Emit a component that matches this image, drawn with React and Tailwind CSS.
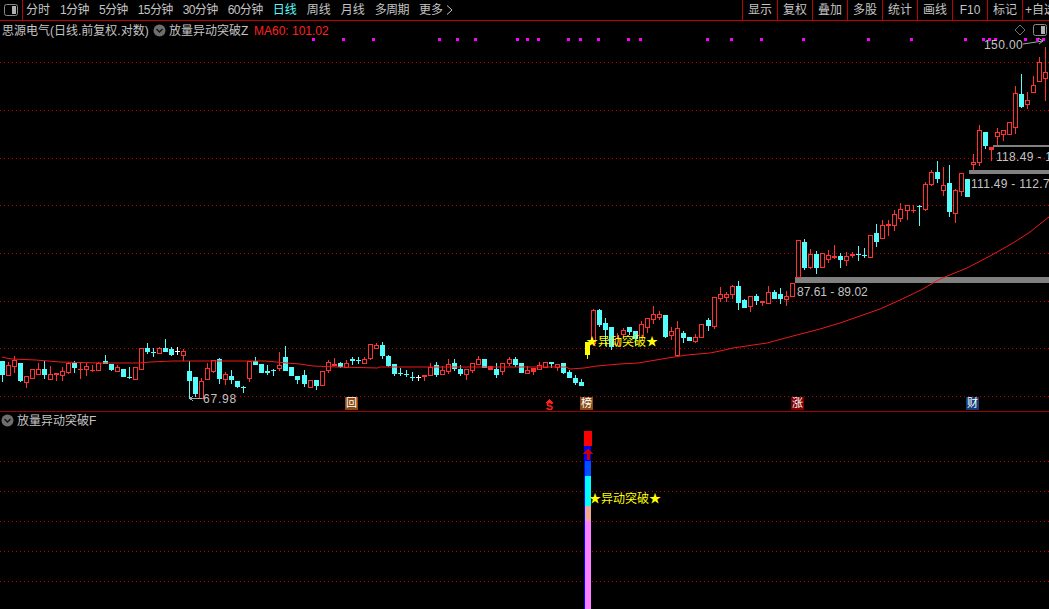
const tabs = ['分时', '1分钟', '5分钟', '15分钟', '30分钟', '60分钟', '日线', '周线', '月线', '多周期', '更多'];
const rightTabs = ['显示', '复权', '叠加', '多股', '统计', '画线', 'F10', '标记'];

// [type, high, bodyTop, bodyBottom, low] in page pixels. r = hollow red, c = cyan, f = solid red, w = white cross
const candles = [
  ['c', 361, 361, 374, 381], ['r', 362, 365, 375, 375], ['r', 356, 360, 366, 372], ['c', 363, 363, 380, 381], ['r', 376, 376, 382, 387],
  ['r', 369, 369, 378, 378], ['r', 363, 369, 374, 374], ['c', 361, 369, 374, 378], ['r', 366, 374, 379, 379], ['f', 373, 373, 374, 380],
  ['r', 367, 371, 375, 380], ['r', 362, 363, 372, 373], ['c', 361, 363, 367, 372], ['f', 363, 369, 369, 378], ['r', 363, 366, 369, 375],
  ['f', 365, 370, 370, 371], ['r', 362, 363, 370, 370], ['c', 355, 361, 363, 363], ['c', 364, 364, 369, 370], ['r', 365, 367, 371, 371],
  ['c', 369, 369, 376, 376], ['c', 367, 377, 377, 378], ['r', 367, 367, 379, 379], ['r', 348, 348, 369, 369], ['c', 343, 348, 351, 353],
  ['c', 348, 352, 352, 356], ['r', 347, 348, 353, 353], ['c', 339, 348, 351, 351], ['c', 347, 349, 354, 355], ['w', 347, 351, 351, 354],
  ['r', 349, 351, 355, 360], ['c', 361, 371, 380, 398], ['c', 377, 377, 393, 396], ['r', 378, 381, 398, 398], ['r', 363, 368, 379, 379],
  ['r', 360, 360, 371, 372], ['c', 358, 359, 378, 383], ['r', 372, 374, 379, 384], ['c', 370, 376, 379, 383], ['c', 381, 381, 386, 387],
  ['c', 386, 387, 387, 392], ['r', 361, 361, 378, 381], ['c', 357, 361, 364, 364], ['c', 364, 364, 372, 372], ['c', 365, 371, 372, 374],
  ['c', 369, 370, 370, 375], ['r', 352, 365, 368, 370], ['c', 346, 357, 370, 370], ['c', 367, 367, 375, 375], ['c', 376, 376, 379, 383],
  ['c', 370, 375, 383, 386], ['r', 380, 380, 387, 387], ['c', 380, 380, 385, 389], ['r', 371, 371, 385, 385], ['r', 360, 362, 370, 372],
  ['f', 358, 364, 365, 365], ['c', 362, 363, 366, 367], ['r', 360, 363, 367, 367], ['c', 357, 359, 360, 364], ['c', 357, 360, 360, 363],
  ['r', 357, 359, 363, 363], ['r', 344, 344, 358, 359], ['r', 343, 345, 348, 348], ['c', 342, 345, 355, 358], ['c', 355, 356, 365, 366],
  ['c', 364, 364, 373, 375], ['c', 368, 373, 373, 375], ['c', 370, 374, 374, 376], ['c', 372, 377, 377, 380], ['w', 375, 377, 377, 380],
  ['f', 375, 375, 376, 380], ['r', 363, 367, 375, 375], ['c', 362, 365, 374, 376], ['r', 366, 370, 374, 374], ['r', 359, 364, 371, 373],
  ['c', 359, 363, 368, 370], ['c', 365, 369, 373, 375], ['r', 369, 369, 374, 379], ['r', 363, 363, 370, 372], ['r', 356, 359, 364, 364],
  ['c', 359, 359, 367, 367], ['f', 366, 366, 369, 369], ['c', 363, 369, 374, 377], ['r', 363, 363, 371, 374], ['r', 357, 359, 363, 365],
  ['c', 357, 359, 364, 366], ['c', 363, 363, 372, 372], ['r', 366, 370, 373, 373], ['f', 368, 368, 371, 374], ['r', 362, 365, 369, 369],
  ['r', 362, 362, 367, 367], ['c', 362, 362, 363, 367], ['r', 364, 364, 367, 370], ['c', 363, 363, 372, 373], ['c', 370, 372, 377, 377],
  ['c', 375, 378, 382, 384], ['c', 379, 382, 385, 385], ['y', 342, 342, 354, 358], ['r', 309, 310, 343, 345], ['c', 309, 310, 324, 326],
  ['c', 318, 323, 329, 345], ['c', 327, 327, 346, 349], ['r', 333, 338, 345, 345], ['r', 328, 330, 334, 337], ['c', 327, 327, 331, 334],
  ['c', 331, 331, 338, 345], ['r', 321, 324, 337, 337], ['r', 318, 318, 327, 332], ['r', 306, 314, 319, 323], ['r', 311, 314, 317, 319],
  ['c', 315, 315, 336, 337], ['r', 327, 331, 335, 339], ['r', 321, 328, 355, 355], ['c', 331, 333, 337, 342], ['c', 337, 337, 340, 340],
  ['r', 334, 337, 341, 342], ['r', 324, 324, 337, 337], ['c', 318, 320, 325, 330], ['r', 297, 297, 326, 328], ['r', 287, 294, 298, 301],
  ['r', 292, 294, 297, 301], ['r', 285, 286, 294, 298], ['c', 281, 286, 302, 309], ['c', 299, 300, 307, 307], ['r', 296, 296, 306, 311],
  ['c', 294, 296, 300, 304], ['f', 301, 301, 302, 305], ['r', 286, 292, 303, 303], ['c', 290, 292, 298, 298], ['c', 288, 294, 298, 303],
  ['r', 291, 296, 299, 305], ['r', 283, 283, 296, 296], ['r', 240, 240, 277, 277], ['c', 239, 242, 267, 269], ['r', 249, 254, 267, 268],
  ['c', 251, 254, 267, 273], ['r', 253, 253, 267, 267], ['r', 250, 255, 259, 262], ['f', 245, 256, 257, 258], ['c', 253, 256, 259, 267],
  ['r', 252, 256, 260, 265], ['f', 252, 254, 255, 257], ['c', 246, 254, 254, 260], ['c', 248, 255, 255, 257], ['r', 235, 235, 257, 257],
  ['c', 224, 233, 241, 246], ['r', 220, 225, 238, 238], ['f', 220, 224, 225, 235], ['r', 210, 214, 225, 230], ['r', 203, 209, 218, 221],
  ['r', 205, 205, 210, 219], ['f', 205, 210, 210, 212], ['c', 205, 206, 206, 225], ['r', 182, 184, 209, 210], ['r', 170, 172, 184, 185],
  ['c', 161, 172, 178, 182], ['r', 167, 185, 190, 195], ['c', 165, 183, 211, 216], ['r', 189, 190, 213, 222], ['r', 173, 173, 191, 195],
  ['c', 179, 179, 196, 196], ['r', 154, 162, 164, 169], ['r', 125, 130, 162, 165], ['c', 132, 132, 145, 148], ['f', 147, 147, 149, 160],
  ['r', 128, 132, 136, 144], ['r', 130, 130, 134, 140], ['r', 122, 122, 134, 134], ['r', 86, 93, 127, 133], ['c', 74, 94, 106, 107],
  ['r', 92, 100, 104, 108], ['r', 76, 85, 92, 92], ['r', 57, 62, 81, 81], ['r', 47, 72, 78, 100],
];

const maLine = '2,357 6,358 12,359 36,360 48,361 60,362 100,363 140,363 150,362 173,361 265,361 277,362 287,363 300,364 313,366 337,367 378,368 379,367 473,367 566,367 570,369 584,368 597,366 620,364 638,363 668,358 687,355 710,353 720,351 733,348 767,343 793,336 820,329 840,323 860,316 880,309 900,300 921,290 940,279 967,268 990,256 1013,243 1030,232 1045,220 1049,217';

const dots = [313, 343, 373, 439, 457, 475, 517, 527, 538, 568, 580, 598, 628, 640, 707, 731, 761, 803, 868, 911, 965, 983, 989, 995, 1025, 1037, 1043];
const upperGrid = [62, 110, 158, 205, 253, 301, 348, 396];
const lowerGrid = [461, 491, 521, 551, 581];

function Candle({ c, i }) {
  const [type, hi, top, bot, lo] = c;
  const x = Math.round(2 + 6.03 * i) + 0.5;
  const color = { r: '#ff3232', f: '#ff3232', c: '#54fcfc', w: '#ffffff', y: '#ffff00' }[type];
  const hollow = type === 'r';
  return (
    <g>
      <line x1={x} x2={x} y1={hi} y2={lo + 1} stroke={color} />
      {hollow ? (
        <rect x={x - 2} y={top + 0.5} width={4} height={bot - top} fill="#000" stroke={color} />
      ) : (
        <rect x={x - 2.5} y={top} width={5} height={Math.max(bot - top + 1, 1)} fill={color} />
      )}
    </g>
  );
}

function CircleToggle() {
  return (
    <svg width="13" height="13" viewBox="0 0 13 13" className="shrink-0">
      <circle cx="6.5" cy="6.5" r="6" fill="#6e6e6e" />
      <path d="M3.5 5 L6.5 8 L9.5 5" fill="none" stroke="#111" strokeWidth="1.4" />
    </svg>
  );
}

function PanelIcon() {
  return (
    <svg width="14" height="12" viewBox="0 0 14 12">
      <rect x="0.5" y="0.5" width="13" height="11" rx="2" fill="none" stroke="#8a8a8a" />
      <rect x="8" y="2" width="4" height="8" fill="#b0b0b0" />
    </svg>
  );
}

function App() {
  return (
    <div className="w-[1049px] h-[609px] overflow-hidden bg-black text-[#c4c4c4] text-[12px] leading-none font-['Liberation_Sans','Noto_Sans_CJK_SC',sans-serif]">
      {/* Toolbar */}
      <div className="flex h-[21px] border-b border-[#c00000]">
        <div className="flex w-[23px] items-center justify-center border-r border-[#c00000]">
          <PanelIcon />
        </div>
        <div className="flex items-center gap-[10px] pl-[3px]">
          {tabs.map(t => (
            <span
              key={t}
              className={t === '日线' ? 'text-[#54fcfc]' : t.includes('分钟') || t === '多周期' ? 'tracking-[-0.6px]' : ''}
            >
              {t}
            </span>
          ))}
          <svg width="7" height="10" viewBox="0 0 7 10" className="-ml-[7px]">
            <path d="M1 0.5 L6 5 L1 9.5" fill="none" stroke="#c4c4c4" />
          </svg>
        </div>
        <div className="flex-1" />
        <div className="flex">
          {rightTabs.map(t => (
            <span key={t} className="flex w-[35px] items-center justify-center border-l border-[#c00000]">{t}</span>
          ))}
          <span className="flex w-[27px] items-center overflow-hidden whitespace-nowrap border-l border-[#c00000] pl-[2px]">+自选</span>
        </div>
      </div>

      {/* Main chart */}
      <div className="relative h-[391px] border-b border-[#a00000]">
        <svg className="absolute inset-0" width="1049" height="391" viewBox="0 21 1049 391" shapeRendering="crispEdges">
          {upperGrid.map(y => (
            <line key={y} x1="0" x2="1049" y1={y + 0.5} y2={y + 0.5} stroke="#c00000" strokeDasharray="1 3" />
          ))}
          {dots.map(x => (
            <rect key={x} x={x - 1.5} y="38" width="3" height="3" fill="#ff00ff" />
          ))}
          <rect x="795" y="277" width="254" height="6" fill="#808080" />
          <rect x="969" y="170" width="80" height="4" fill="#808080" />
          <rect x="993" y="145" width="56" height="2" fill="#808080" />
          {candles.map((c, i) => (
            <Candle key={i} c={c} i={i} />
          ))}
          <polyline points={maLine} fill="none" stroke="#f01818" shapeRendering="auto" />
          <path d="M190 398.5 H202 M190 398.5 L193 396 M190 398.5 L193 401" fill="none" stroke="#a8a8a8" />
          <path d="M1023 44 L1043 41 M1043 41 L1038 38 M1043 41 L1039 44" fill="none" stroke="#a8a8a8" shapeRendering="auto" />
          <path d="M1020 25 L1025 30 L1020 35 L1015 30 Z" fill="none" stroke="#707070" shapeRendering="auto" />
          <path d="M549.5 399 L553 403 L546 403 Z" fill="#ff2020" />
        </svg>

        {/* Legend */}
        <div className="relative flex h-[19px] items-center pl-[2px]">
          <span className="w-[151px] whitespace-nowrap">思源电气(日线.前复权.对数)</span>
          <CircleToggle />
          <span className="ml-[3px] w-[85px] whitespace-nowrap">放量异动突破Z</span>
          <span className="text-[#ff2020]">MA60: 101.02</span>
        </div>

        {/* Labels over the chart */}
        <div className="absolute left-[1033px] top-[3px]"><PanelIcon /></div>
        <span className="absolute left-[984px] top-[18px] tracking-[0.4px]">150.00</span>
        <span className="absolute left-[203px] top-[372px] tracking-[0.8px]">67.98</span>
        <span className="absolute left-[797px] top-[265px] whitespace-nowrap">87.61 - 89.02</span>
        <span className="absolute left-[971px] top-[157px] whitespace-nowrap tracking-[0.3px]">111.49 - 112.7</span>
        <span className="absolute left-[996px] top-[130px] whitespace-nowrap tracking-[0.3px]">118.49 - 1</span>
        <span className="absolute left-[586px] top-[315px] whitespace-nowrap text-[#ffff00]">★异动突破★</span>

        <span className="absolute left-[345px] top-[376px] flex h-[13px] w-[13px] items-center justify-center bg-[#8a4a12] text-[11px] text-white">回</span>
        <span className="absolute left-[545px] top-[380px] flex h-[10px] w-[9px] items-center justify-center text-[11px] font-bold text-[#ff2020]">S</span>
        <span className="absolute left-[580px] top-[376px] flex h-[13px] w-[13px] items-center justify-center bg-[#8a4a12] text-[11px] text-white">榜</span>
        <span className="absolute left-[791px] top-[376px] flex h-[13px] w-[13px] items-center justify-center bg-[#800000] text-[11px] text-white">涨</span>
        <span className="absolute left-[966px] top-[376px] flex h-[13px] w-[13px] items-center justify-center bg-[#103c78] text-[11px] text-white">财</span>
      </div>

      {/* Lower indicator */}
      <div className="relative h-[197px]">
        <svg className="absolute inset-0" width="1049" height="197" viewBox="0 412 1049 197" shapeRendering="crispEdges">
          {lowerGrid.map(y => (
            <line key={y} x1="0" x2="1049" y1={y + 0.5} y2={y + 0.5} stroke="#c00000" strokeDasharray="1 3" />
          ))}
          <rect x="584" y="431" width="8" height="15" fill="#ff0000" />
          <rect x="584" y="446" width="7" height="163" fill="#0000ff" />
          <rect x="585" y="461" width="6" height="15" fill="#0050ff" />
          <rect x="585" y="476" width="6" height="30" fill="#00ffff" />
          <rect x="585" y="506" width="6" height="15" fill="#f0a890" />
          <rect x="585" y="521" width="6" height="88" fill="#ff80ff" />
          <path d="M588 448 L593 454 L589.5 454 L589.5 460 L586.5 460 L586.5 454 L583 454 Z" fill="#c80000" />
        </svg>
        <div className="relative flex h-[17px] items-center gap-[3px] pl-[1px]">
          <CircleToggle />
          <span>放量异动突破F</span>
        </div>
        <span className="absolute left-[589px] top-[81px] whitespace-nowrap text-[#ffff00]">★异动突破★</span>
      </div>
    </div>
  );
}

export default App;
